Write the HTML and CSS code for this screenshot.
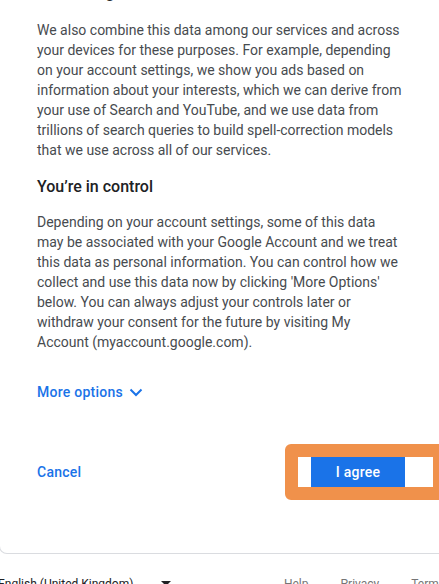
FILE: index.html
```html
<!DOCTYPE html>
<html lang="en">
<head>
<meta charset="utf-8">
<link rel="stylesheet" href="styles.css">
</head>
<body>
<div class="card">
  <div class="content">
    <h2 class="heading cut">Combining data</h2>
    <p class="text">We also combine this data among our services and across your devices for these purposes. For example, depending on your account settings, we show you ads based on information about your interests, which we can derive from your use of Search and YouTube, and we use data from trillions of search queries to build spell-correction models that we use across all of our services.</p>
    <h2 class="heading">You’re in control</h2>
    <p class="text">Depending on your account settings, some of this data may be associated with your Google Account and we treat this data as personal information. You can control how we collect and use this data now by clicking 'More Options' below. You can always adjust your controls later or withdraw your consent for the future by visiting My Account (myaccount.google.com).</p>
    <div class="more">More options
      <svg class="chev" width="14" height="9" viewBox="0 0 14 9"><polyline points="1.5,1.5 7,7 12.5,1.5" fill="none" stroke="#1a73e8" stroke-width="2"/></svg>
    </div>
    <div class="actions">
      <span class="cancel">Cancel</span>
      <span class="focus"><span class="agree">I agree</span></span>
    </div>
  </div>
</div>
<div class="footer">
  <div class="lang">English (United Kingdom) <span class="tri"></span></div>
  <div class="links"><span>Help</span><span>Privacy</span><span>Terms</span></div>
</div>
</body>
</html>
```
FILE: styles.css
```css
html, body {
  margin: 0;
  padding: 0;
  background: #fff;
  overflow: hidden;
  width: 439px;
  height: 584px;
}
body {
  font-family: Roboto, "Liberation Sans", sans-serif;
}
.card {
  margin-left: -1px;
  width: 460px;
  height: 573px;
  margin-top: -19px;
  border: 1px solid #dadce0;
  border-top: none;
  border-radius: 0 0 8px 8px;
  box-sizing: border-box;
}
.content {
  padding-left: 37px;
  width: 403px;
  box-sizing: border-box;
  padding-right: 0;
}
.heading {
  margin: 0;
  font-size: 16px;
  line-height: 24px;
  font-weight: 500;
  color: #202124;
}
.heading.cut {
  margin-bottom: 15px;
}
.text {
  margin: 0 0 15px;
  font-size: 14px;
  line-height: 20px;
  color: #474b4f;
}
.text + .heading { margin-bottom: 13px; }
.more {
  margin-top: 30px;
  font-size: 14px;
  line-height: 20px;
  font-weight: 500;
  color: #1a73e8;
  display: flex;
  align-items: center;
  gap: 6px;
  letter-spacing: 0.25px;
}
.chev { display: block; }
.actions {
  margin-top: 42px;
  display: flex;
  justify-content: space-between;
  align-items: center;
  margin-right: -43px;
}
.cancel {
  font-size: 14px;
  font-weight: 500;
  color: #1a73e8;
  letter-spacing: 0.25px;
}
.focus {
  display: flex;
  border: 13px solid #f0914b;
  border-radius: 6px;
  background: #fff;
  padding: 0 28px 0 13px;
}
.agree {
  display: block;
  width: 94px;
  height: 30px;
  line-height: 30px;
  text-align: center;
  background: #1a73e8;
  color: #fff;
  font-size: 14px;
  font-weight: 500;
  letter-spacing: 0.25px;
}
.footer {
  display: flex;
  justify-content: space-between;
  margin-top: 22px;
  font-size: 12px;
  line-height: 16px;
  color: #5f6368;
  margin-left: -2px;
  margin-right: -6px;
}
.lang {
  display: flex;
  align-items: flex-start;
  gap: 28px;
  color: #202124;
}
.tri {
  width: 0;
  height: 0;
  border-left: 5px solid transparent;
  border-right: 5px solid transparent;
  border-top: 5px solid #202124;
  margin-top: 5px;
}
.links {
  display: flex;
  gap: 32px;
  color: #757575;
}
```
